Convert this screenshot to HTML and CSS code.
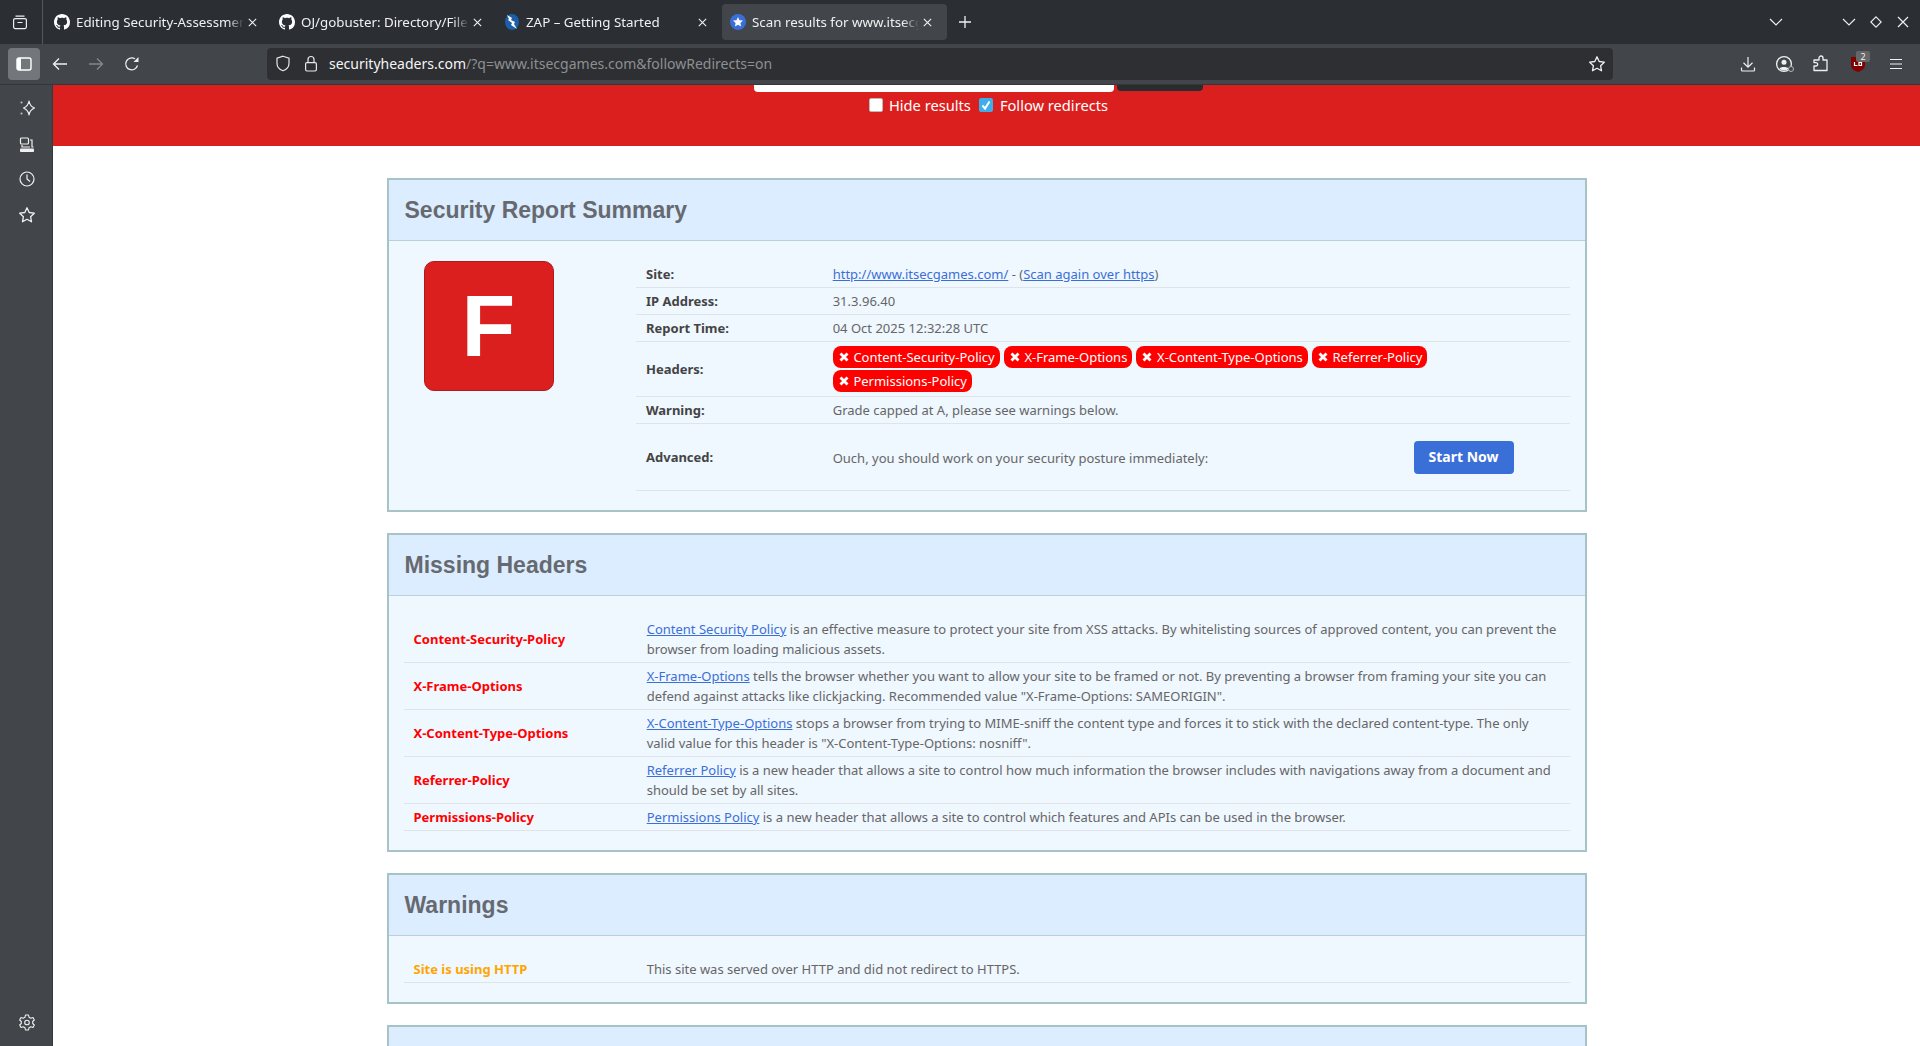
FILE: index.html
```html
<!DOCTYPE html>
<html lang="en">
<head>
    <meta charset="UTF-8">
    <meta name="viewport" content="width=device-width, initial-scale=1.0">
    <title>Scan results for www.itsecgames.com</title>
    <link rel="stylesheet" href="styles.css">
</head>
<body>
    <svg class="defs" width="0" height="0">
        <symbol id="octocat" viewBox="0 0 16 16">
            <path fill="#fff" d="M8 0C3.58 0 0 3.58 0 8c0 3.54 2.29 6.53 5.47 7.59.4.07.55-.17.55-.38 0-.19-.01-.82-.01-1.49-2.01.37-2.53-.49-2.69-.94-.09-.23-.48-.94-.82-1.13-.28-.15-.68-.52-.01-.53.63-.01 1.08.58 1.23.82.72 1.21 1.87.87 2.33.66.07-.52.28-.87.51-1.07-1.78-.2-3.64-.89-3.64-3.95 0-.87.31-1.59.82-2.15-.08-.2-.36-1.02.08-2.12 0 0 .67-.21 2.2.82.64-.18 1.32-.27 2-.27.68 0 1.36.09 2 .27 1.53-1.04 2.2-.82 2.2-.82.44 1.1.16 1.92.08 2.12.51.56.82 1.27.82 2.15 0 3.07-1.87 3.75-3.65 3.95.29.25.54.73.54 1.48 0 1.07-.01 1.93-.01 2.2 0 .21.15.46.55.38A8.013 8.013 0 0016 8c0-4.42-3.58-8-8-8z"/>
        </symbol>
        <symbol id="close" viewBox="0 0 12 12">
            <path d="M2 2l8 8M10 2l-8 8" fill="none" stroke="#f2f2f2" stroke-width="1.2"/>
        </symbol>
        <symbol id="star" viewBox="0 0 18 18">
            <path d="M9 1.8l2.2 4.7 5.1.7-3.7 3.5.9 5.1L9 13.3l-4.5 2.5.9-5.1-3.7-3.5 5.1-.7z" fill="none" stroke="#f0f0f0" stroke-width="1.3" stroke-linejoin="round"/>
        </symbol>
        <symbol id="cross" viewBox="0 0 10 10">
            <path d="M1.5 1.5l7 7M8.5 1.5l-7 7" fill="none" stroke="#fff" stroke-width="2.8"/>
        </symbol>
    </svg>

    <div class="tabbar">
        <div class="tab-manager">
            <svg width="16" height="16" viewBox="0 0 16 16" fill="none" stroke="#f0f0f0" stroke-width="1.2"><rect x="1.6" y="4.6" width="12.8" height="10" rx="1.5"/><path d="M3.5 2.2h9M5.5 8.5h5"/></svg>
        </div>
        <div class="tab">
            <svg class="favicon"><use href="#octocat"/></svg>
            <span class="tab-title">Editing Security-Assessment</span>
            <svg class="tab-close"><use href="#close"/></svg>
        </div>
        <div class="tab">
            <svg class="favicon"><use href="#octocat"/></svg>
            <span class="tab-title">OJ/gobuster: Directory/File, DNS</span>
            <svg class="tab-close"><use href="#close"/></svg>
        </div>
        <div class="tab">
            <svg class="favicon" viewBox="0 0 16 16"><ellipse cx="8" cy="8" rx="7" ry="8" fill="#1c5fa8"/><path d="M3 1l5 3-1 2 4 2-1 2 3 5-6-4 1-2-4-3 1-1z" fill="#fff"/></svg>
            <span class="tab-title">ZAP – Getting Started</span>
            <svg class="tab-close"><use href="#close"/></svg>
        </div>
        <div class="tab active">
            <svg class="favicon" viewBox="0 0 16 16"><circle cx="8" cy="8" r="8" fill="#3b6fd8"/><path d="M8 3l1.5 3.2 3.5.4-2.6 2.4.7 3.5L8 10.8l-3.1 1.7.7-3.5L3 6.6l3.5-.4z" fill="#fff"/></svg>
            <span class="tab-title">Scan results for www.itsecgames.com</span>
            <svg class="tab-close"><use href="#close"/></svg>
        </div>
        <svg class="new-tab" width="14" height="14" viewBox="0 0 14 14"><path d="M7 1v12M1 7h12" stroke="#f0f0f0" stroke-width="1.3"/></svg>
        <div class="tabbar-right">
            <svg width="14" height="8" viewBox="0 0 14 8"><path d="M1 1l6 6 6-6" fill="none" stroke="#f0f0f0" stroke-width="1.2"/></svg>
            <div class="window-btns">
                <svg width="14" height="8" viewBox="0 0 14 8"><path d="M1 1l6 6 6-6" fill="none" stroke="#f0f0f0" stroke-width="1.1"/></svg>
                <svg width="12" height="12" viewBox="0 0 12 12"><path d="M6 .8L11.2 6 6 11.2.8 6z" fill="none" stroke="#f0f0f0" stroke-width="1.1"/></svg>
                <svg width="12" height="12" viewBox="0 0 12 12"><path d="M1 1l10 10M11 1L1 11" stroke="#f0f0f0" stroke-width="1.2"/></svg>
            </div>
        </div>
    </div>

    <div class="toolbar">
        <div class="sidebar-toggle">
            <svg width="16" height="14" viewBox="0 0 16 14"><rect x="1" y="1" width="14" height="12" rx="2" fill="none" stroke="#fff" stroke-width="1.4"/><rect x="1" y="1" width="4" height="12" fill="#fff"/></svg>
        </div>
        <svg class="nav-btn" width="16" height="14" viewBox="0 0 16 14"><path d="M15 7H1.5M7 1.5L1.5 7 7 12.5" fill="none" stroke="#f0f0f0" stroke-width="1.3"/></svg>
        <svg class="nav-btn" width="16" height="14" viewBox="0 0 16 14"><path d="M1 7h13.5M9 1.5L14.5 7 9 12.5" fill="none" stroke="#85888b" stroke-width="1.3"/></svg>
        <svg class="nav-btn" width="16" height="16" viewBox="0 0 16 16"><path d="M13.5 9.5A6 6 0 1 1 11 2.8" fill="none" stroke="#f0f0f0" stroke-width="1.3"/><path d="M14.5 1v5h-5z" fill="#f0f0f0"/></svg>
        <div class="urlbar">
            <svg width="16" height="17" viewBox="0 0 16 17"><path d="M8 1.2l6 2v5c0 3.6-2.6 6.3-6 7.6-3.4-1.3-6-4-6-7.6v-5z" fill="none" stroke="#e8e8e8" stroke-width="1.2"/></svg>
            <svg class="lock" width="14" height="17" viewBox="0 0 14 17"><path d="M4 8V4.500a3 3 0 0 1 6 0V8" fill="none" stroke="#e8e8e8" stroke-width="1.2"/><rect x="1.6" y="7.6" width="10.8" height="8.4" rx="1.4" fill="none" stroke="#e8e8e8" stroke-width="1.2"/></svg>
            <span class="url"><span class="url-host">securityheaders.com</span>/?q=www.itsecgames.com&amp;followRedirects=on</span>
            <svg class="url-star"><use href="#star"/></svg>
        </div>
        <div class="toolbar-right">
            <svg width="16" height="16" viewBox="0 0 16 16"><path d="M8 1v10M3.5 6.8L8 11.2l4.5-4.400M1.500 11.500v2.500a1 1 0 0 0 1 1h11a1 1 0 0 0 1-1v-2.500" fill="none" stroke="#f0f0f0" stroke-width="1.2"/></svg>
            <svg class="tool-account" width="20" height="18" viewBox="0 0 20 18"><circle cx="9" cy="9" r="7.4" fill="none" stroke="#f0f0f0" stroke-width="1.3"/><circle cx="9" cy="7.2" r="2.5" fill="#f0f0f0"/><path d="M4.500 13.500c1-2 7.500-2 9 0-2 2.500-6.500 2.500-9 0z" fill="#f0f0f0"/><circle cx="16" cy="14" r="2.5" fill="#42464a" stroke="#b5b5b5" stroke-width="1"/></svg>
            <svg class="tool-ext" width="16" height="17" viewBox="0 0 16 17"><path d="M1 15.500V11h2a1.700 1.700 0 0 0 0-3.400H1V5h5V3a2 2 0 0 1 4 0v2h4v10.500z" fill="none" stroke="#f0f0f0" stroke-width="1.3" stroke-linejoin="round"/></svg>
            <div class="ublock">
                <svg width="14" height="16" viewBox="0 0 14 16"><path d="M0 1h14v8c0 3.500-3.500 6-7 7-3.500-1-7-3.500-7-7z" fill="#800000"/><path d="M3.500 6v3.500h3M8 6.500h2.500v3H8z" fill="none" stroke="#fff" stroke-width="1.2"/></svg>
                <span class="badge">2</span>
            </div>
            <svg class="tool-menu" width="14" height="12" viewBox="0 0 14 12"><path d="M1 1.500h12M1 6h12M1 10.500h12" stroke="#f0f0f0" stroke-width="1.2"/></svg>
        </div>
    </div>

    <div class="workspace">
        <div class="sidebar">
            <svg width="16" height="16" viewBox="0 0 16 16"><path d="M10 1c.5 3.500 2 5.500 5.500 7-3.500 1.500-5 3.500-5.500 7-.5-3.500-2-5.500-5.500-7 3.500-1.500 5-3.500 5.500-7z" fill="none" stroke="#f0f0f0" stroke-width="1.2" stroke-linejoin="round"/><circle cx="2.500" cy="2.500" r="1" fill="#c8c8c8"/><circle cx="2.500" cy="13.500" r="1" fill="#c8c8c8"/></svg>
            <svg class="side-sync" width="16" height="16" viewBox="0 0 16 16"><rect x="1.500" y="1" width="8" height="6" rx="1" fill="none" stroke="#f0f0f0" stroke-width="1.2"/><path d="M11 3h2v7h1.500M3 8v2h8" fill="none" stroke="#f0f0f0" stroke-width="1.2"/><rect x="1" y="11.500" width="14" height="3.500" rx=".8" fill="#f0f0f0"/></svg>
            <svg class="side-history" width="16" height="16" viewBox="0 0 16 16"><circle cx="8" cy="8" r="7" fill="none" stroke="#f0f0f0" stroke-width="1.2"/><path d="M8 3.500V8l3 2.500" fill="none" stroke="#f0f0f0" stroke-width="1.2"/></svg>
            <svg class="side-star"><use href="#star"/></svg>
            <svg class="side-gear" width="16" height="17" viewBox="0 0 16 17"><path d="M6.500 1h3l.5 2.200 1.800 1 2.200-.7 1.300 2.500-1.600 1.500v2l1.600 1.500-1.300 2.500-2.200-.7-1.800 1-.5 2.200h-3l-.5-2.200-1.800-1-2.200.7L.7 11l1.600-1.500v-2L.7 6 2 3.500l2.200.7 1.800-1z" fill="none" stroke="#f0f0f0" stroke-width="1.1" stroke-linejoin="round"/><circle cx="8" cy="8.500" r="2.300" fill="none" stroke="#f0f0f0" stroke-width="1.1"/></svg>
        </div>

        <div class="page">
            <div class="hero">
                <div class="search-row">
                    <div class="search-input"></div>
                    <div class="search-btn"></div>
                </div>
                <div class="search-options">
                    <span class="check"></span>
                    <span class="check-label">Hide results</span>
                    <span class="check checked">
                        <svg width="14" height="14" viewBox="0 0 14 14"><path d="M3.500 7.500l2.500 3 4.500-7" fill="none" stroke="#fff" stroke-width="2"/></svg>
                    </span>
                    <span class="check-label">Follow redirects</span>
                </div>
            </div>

            <div class="reports">
                <section class="card">
                    <h2>Security Report Summary</h2>
                    <div class="card-body summary">
                        <div class="grade-col">
                            <div class="grade">F</div>
                        </div>
                        <table class="info">
                            <tr>
                                <th>Site:</th>
                                <td><a href="#">http://www.itsecgames.com/</a> - (<a href="#">Scan again over https</a>)</td>
                            </tr>
                            <tr>
                                <th>IP Address:</th>
                                <td>31.3.96.40</td>
                            </tr>
                            <tr>
                                <th>Report Time:</th>
                                <td>04 Oct 2025 12:32:28 UTC</td>
                            </tr>
                            <tr>
                                <th>Headers:</th>
                                <td class="pills-cell">
                                    <div class="pills">
                                        <span class="pill"><svg><use href="#cross"/></svg>Content-Security-Policy</span>
                                        <span class="pill"><svg><use href="#cross"/></svg>X-Frame-Options</span>
                                        <span class="pill"><svg><use href="#cross"/></svg>X-Content-Type-Options</span>
                                        <span class="pill"><svg><use href="#cross"/></svg>Referrer-Policy</span>
                                        <span class="pill"><svg><use href="#cross"/></svg>Permissions-Policy</span>
                                    </div>
                                </td>
                            </tr>
                            <tr>
                                <th>Warning:</th>
                                <td>Grade capped at A, please see warnings below.</td>
                            </tr>
                            <tr>
                                <th class="advanced-label">Advanced:</th>
                                <td>
                                    <div class="advanced">
                                        <span>Ouch, you should work on your security posture immediately:</span>
                                        <a class="start-btn" href="#">Start Now</a>
                                    </div>
                                </td>
                            </tr>
                        </table>
                    </div>
                </section>

                <section class="card">
                    <h2>Missing Headers</h2>
                    <div class="card-body">
                        <table class="details">
                            <tr>
                                <th class="bad">Content-Security-Policy</th>
                                <td><a href="#">Content Security Policy</a> is an effective measure to protect your site from XSS attacks. By whitelisting sources of approved content, you can prevent the browser from loading malicious assets.</td>
                            </tr>
                            <tr>
                                <th class="bad">X-Frame-Options</th>
                                <td><a href="#">X-Frame-Options</a> tells the browser whether you want to allow your site to be framed or not. By preventing a browser from framing your site you can defend against attacks like clickjacking. Recommended value "X-Frame-Options: SAMEORIGIN".</td>
                            </tr>
                            <tr>
                                <th class="bad">X-Content-Type-Options</th>
                                <td><a href="#">X-Content-Type-Options</a> stops a browser from trying to MIME-sniff the content type and forces it to stick with the declared content-type. The only valid value for this header is "X-Content-Type-Options: nosniff".</td>
                            </tr>
                            <tr>
                                <th class="bad">Referrer-Policy</th>
                                <td><a href="#">Referrer Policy</a> is a new header that allows a site to control how much information the browser includes with navigations away from a document and should be set by all sites.</td>
                            </tr>
                            <tr>
                                <th class="bad">Permissions-Policy</th>
                                <td><a href="#">Permissions Policy</a> is a new header that allows a site to control which features and APIs can be used in the browser.</td>
                            </tr>
                        </table>
                    </div>
                </section>

                <section class="card">
                    <h2>Warnings</h2>
                    <div class="card-body">
                        <table class="details">
                            <tr>
                                <th class="warn">Site is using HTTP</th>
                                <td>This site was served over HTTP and did not redirect to HTTPS.</td>
                            </tr>
                        </table>
                    </div>
                </section>

                <section class="card">
                    <h2></h2>
                </section>
            </div>
        </div>
    </div>
</body>
</html>
```

FILE: styles.css
```css
* {
    box-sizing: border-box;
}
html, body {
    height: 100%;
}
body {
    margin: 0;
    display: flex;
    flex-direction: column;
    overflow: hidden;
    font-family: "Noto Sans", sans-serif;
    font-size: 13px;
    color: #666;
    background: #fff;
}
.defs {
    position: absolute;
}

/* browser tabs */
.tabbar {
    height: 44px;
    flex: none;
    display: flex;
    align-items: center;
    background: #2b2e33;
    color: #f0f0f0;
}
.tab-manager {
    width: 43px;
    height: 44px;
    flex: none;
    display: flex;
    align-items: center;
    justify-content: center;
    padding-right: 3px;
    border-right: 1px solid #55585c;
    margin-right: 4px;
}
.tab {
    width: 225px;
    height: 36px;
    flex: none;
    display: flex;
    align-items: center;
    padding: 0 14px 0 7px;
    border-radius: 4px;
    white-space: nowrap;
}
.tab.active {
    background: #42464a;
    padding-left: 8px;
}
.favicon {
    width: 16px;
    height: 16px;
    flex: none;
    margin-right: 6px;
}
.tab-title {
    flex: 1;
    overflow: hidden;
    font-size: 13.33px;
    mask-image: linear-gradient(to left, transparent, #000 16px);
}
.tab-close {
    width: 11px;
    height: 11px;
    flex: none;
    margin-left: 3px;
}
.new-tab {
    margin-left: 11px;
}
.tabbar-right {
    margin-left: auto;
    display: flex;
    align-items: center;
    padding-right: 11px;
}
.window-btns {
    display: flex;
    align-items: center;
    gap: 15px;
    margin-left: 59px;
}
.window-btns svg:first-child {
    margin-right: -1px;
}

/* browser toolbar */
.toolbar {
    height: 41px;
    flex: none;
    display: flex;
    align-items: center;
    padding: 0 0 1px 8px;
    background: #42464a;
    border-bottom: 1px solid #34373a;
}
.sidebar-toggle {
    width: 32px;
    height: 32px;
    flex: none;
    display: flex;
    align-items: center;
    justify-content: center;
    background: #73767b;
    border-radius: 4px;
}
.nav-btn {
    flex: none;
    margin-left: 20px;
}
.sidebar-toggle + .nav-btn {
    margin-left: 12px;
}
.urlbar {
    width: 1346px;
    height: 32px;
    flex: none;
    display: flex;
    align-items: center;
    margin-left: 127px;
    padding: 0 7px 0 8px;
    background: #2d2f33;
    border-radius: 4px;
}
.lock {
    margin-left: 13px;
}
.url {
    margin-left: 11px;
    font-size: 14px;
    color: #8d8f92;
    white-space: nowrap;
}
.url-host {
    color: #f5f5f5;
}
.url-star {
    width: 18px;
    height: 18px;
    margin-left: auto;
}
.toolbar-right {
    display: flex;
    align-items: center;
    margin-left: 127px;
}
.tool-account {
    margin-left: 19px;
}
.tool-ext {
    margin-left: 18px;
}
.ublock {
    position: relative;
    width: 14px;
    height: 16px;
    margin-left: 22px;
}
.ublock svg {
    display: block;
}
.tool-menu {
    margin-left: 24px;
}
.badge {
    position: absolute;
    left: 5px;
    top: -5px;
    width: 14px;
    height: 11px;
    background: #666;
    border-radius: 2px;
    color: #f0f0f0;
    font-size: 9px;
    line-height: 11px;
    text-align: center;
}

/* browser sidebar + page */
.workspace {
    flex: 1;
    min-height: 0;
    display: flex;
}
.sidebar {
    width: 53px;
    flex: none;
    display: flex;
    flex-direction: column;
    align-items: center;
    gap: 20px;
    padding: 15px 0 0 2px;
    background: #42464a;
    border-right: 1px solid #383b3e;
}
.side-sync {
    margin-top: 1px;
}
.side-history {
    margin-top: -2px;
}
.side-star {
    width: 18px;
    height: 18px;
    margin-top: -1px;
}
.side-gear {
    margin-top: auto;
    margin-bottom: 15px;
}
.page {
    flex: 1;
    min-width: 0;
    overflow: hidden;
}

/* red banner */
.hero {
    height: 61px;
    background: #db1f1f;
}
.search-row {
    display: flex;
    gap: 3px;
    margin-left: 701px;
}
.search-input {
    width: 360px;
    height: 7px;
    background: #fff;
    border-radius: 0 0 4px 4px;
}
.search-btn {
    width: 86px;
    height: 6px;
    background: #292b2f;
    border-radius: 0 0 4px 4px;
}
.search-options {
    display: flex;
    align-items: center;
    justify-content: center;
    height: 20px;
    margin-top: 3px;
    padding-left: 4px;
    color: #fff;
    font-size: 14.67px;
}
.check {
    width: 14px;
    height: 14px;
    background: #fff;
    border: 1px solid #bbb;
    border-radius: 2px;
    margin-right: 6px;
}
.checked {
    display: flex;
    background: #3daee9;
    border: none;
    margin-left: 8px;
    margin-right: 7px;
}

/* report cards */
.reports {
    width: 1200px;
    margin: 32px auto 0;
    display: flex;
    flex-direction: column;
    gap: 21px;
}
.card {
    border: 2px solid #a8c3c8;
    background: #eff7ff;
}
.card h2 {
    margin: 0;
    height: 61px;
    padding: 0 16px;
    background: #dcedff;
    border-bottom: 1px solid #b8d0d8;
    font-family: "Liberation Sans", Arial, sans-serif;
    font-size: 23px;
    font-weight: bold;
    line-height: 60px;
    color: #666a70;
}
.card-body {
    padding: 20px 15px 19px;
}
.summary {
    display: flex;
}
.grade-col {
    width: 232.5px;
    flex: none;
    padding-left: 20px;
}
.grade {
    width: 130px;
    height: 130px;
    background: #db1f1f;
    border: 1px solid #b01a1a;
    border-radius: 10px;
    color: #fff;
    font-family: "Liberation Sans", Arial, sans-serif;
    font-size: 88px;
    font-weight: bold;
    line-height: 128px;
    text-align: center;
}
table {
    width: 100%;
    border-collapse: collapse;
    table-layout: fixed;
}
tr {
    border-bottom: 1px solid #e0e4e8;
}
th, td {
    padding: 3px 10px;
    line-height: 20px;
    text-align: left;
    vertical-align: middle;
}
th {
    color: #444;
    font-weight: bold;
}
a {
    color: #3b6fd8;
}
.info th {
    width: 20%;
}
.details th {
    width: 20%;
}
th.bad {
    color: #f00;
}
th.warn {
    color: #ffa500;
}
.pills-cell {
    padding: 4px 10px;
}
.pills {
    display: flex;
    flex-wrap: wrap;
    gap: 2px 4px;
}
.pill {
    height: 22px;
    display: flex;
    align-items: center;
    padding: 0 5px 0 6px;
    background: #f00;
    border-radius: 8px;
    color: #fff;
    line-height: 22px;
}
.pill svg {
    width: 10px;
    height: 10px;
    margin-right: 4.7px;
}
.advanced {
    display: flex;
    align-items: center;
    justify-content: space-between;
    padding: 14px 46px 13px 0;
}
.advanced-label {
    padding-bottom: 4px;
}
.start-btn {
    width: 100px;
    height: 33px;
    background: #3b6fd8;
    border-radius: 4px;
    color: #fff;
    font-size: 14px;
    font-weight: bold;
    line-height: 32px;
    text-align: center;
    text-decoration: none;
}
```
